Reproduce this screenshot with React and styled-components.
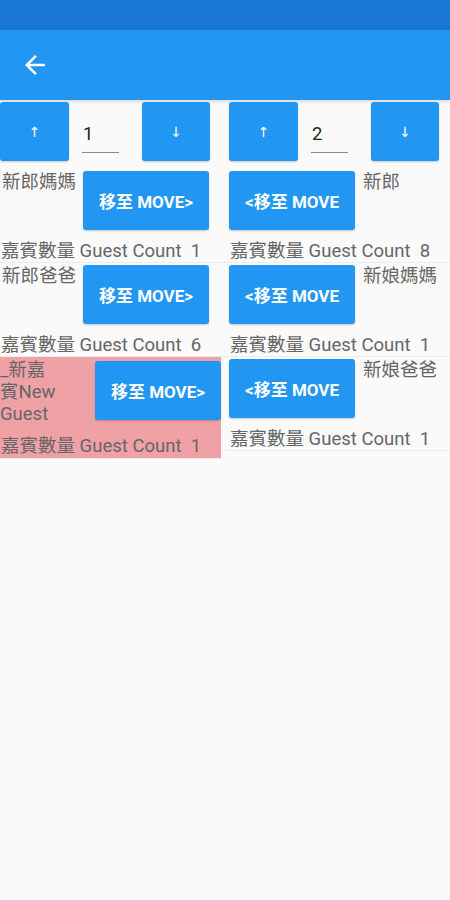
import React from 'react';
import styled, { createGlobalStyle } from 'styled-components';

const GlobalStyle = createGlobalStyle`
    body {
        margin: 0;
        background: #fafafa;
        font-family: Roboto, 'Noto Sans CJK TC', sans-serif;
    }
`

const Page = styled.div`
    width: 450px;
    min-height: 900px;
    background: #fafafa;
`

const StatusBar = styled.div`
    height: 30px;
    background: #1976d2;
`

const AppBar = styled.div`
    height: 70px;
    background: #2196f3;
    display: flex;
    align-items: center;
    padding-left: 20px;
    box-sizing: border-box;
    box-shadow: 0 2px 3px rgba(0, 0, 0, 0.12);
`

const Columns = styled.div`
    display: grid;
    grid-template-columns: 225px 225px;
    align-items: start;
`

const Column = styled.div`
    display: flex;
    flex-direction: column;
`

const Controls = styled.div`
    display: flex;
    align-items: center;
    margin-top: 2px;
    margin-bottom: 8px;
    padding-left: ${p => p.$indent}px;
`

const ArrowButton = styled.button`
    width: ${p => p.$w}px;
    height: 59px;
    margin-left: ${p => p.$gap || 0}px;
    border: none;
    border-radius: 3px;
    background: #2196f3;
    color: #fff;
    font-family: 'DejaVu Sans', sans-serif;
    font-size: 14px;
    padding: 0;
    box-shadow: 0 1px 2px rgba(0, 0, 0, 0.2);
`

const NumberField = styled.div`
    width: 37px;
    margin-left: 13px;
    height: 59px;
    display: flex;
    align-items: flex-end;
    box-sizing: border-box;
    padding-bottom: 8px;
`

const FieldInner = styled.div`
    width: 100%;
    border-bottom: 1px solid #8a8a8a;
    font-size: 18.5px;
    line-height: 30px;
    color: #212121;
    padding-left: 1px;
    padding-bottom: 3px;
`

const Item = styled.div`
    border-bottom: 1px solid #ececec;
    background: ${p => (p.$highlight ? '#efa1a6' : 'transparent')};
    width: ${p => p.$width || 'auto'};
`

const ItemRow = styled.div`
    display: flex;
    align-items: flex-start;
    padding-top: 2px;
    margin-bottom: 10px;
    padding-left: ${p => p.$indent || 0}px;
`

const Name = styled.div`
    width: ${p => p.$w}px;
    flex: none;
    box-sizing: border-box;
    padding-left: ${p => p.$pad || 0}px;
    font-size: 18.5px;
    line-height: 22px;
    color: #666;
`

const NameText = styled.div`
    max-width: ${p => p.$max || 200}px;
`

const RightName = styled(Name)`
    margin-left: 8px;
    width: auto;
`

const MoveButton = styled.button`
    width: 126px;
    height: 59px;
    flex: none;
    margin-top: ${p => p.$top || 0}px;
    border: none;
    border-radius: 3px;
    background: #2196f3;
    color: #fff;
    font-family: Roboto, 'Noto Sans CJK TC', sans-serif;
    font-weight: 700;
    font-size: 17px;
    padding: 0;
    box-shadow: 0 1px 2px rgba(0, 0, 0, 0.2);
`

const Count = styled.div`
    font-size: 18.5px;
    line-height: 22px;
    color: #666;
    padding-left: ${p => p.$indent || 1}px;
    margin-bottom: ${p => p.$tail || 0}px;
    white-space: pre;
`

const BackIcon = () => (
    <svg width="30" height="30" viewBox="0 0 24 24">
        <path fill="#fff" d="M20 11H7.83l5.59-5.59L12 4l-8 8 8 8 1.41-1.41L7.83 13H20v-2z" />
    </svg>
);

const ControlBar = ({ value, indent }) => (
    <Controls $indent={indent}>
        <ArrowButton $w={69}>↑</ArrowButton>
        <NumberField>
            <FieldInner>{value}</FieldInner>
        </NumberField>
        <ArrowButton $w={68} $gap={23}>↓</ArrowButton>
    </Controls>
);

const leftGuests = [
    { name: '新郎媽媽', count: 1 },
    { name: '新郎爸爸', count: 6 },
    { name: '_新嘉賓New Guest', count: 1, highlight: true },
];

const rightGuests = [
    { name: '新郎', count: 8 },
    { name: '新娘媽媽', count: 1 },
    { name: '新娘爸爸', count: 1 },
];

const LeftItem = ({ guest }) => (
    <Item $highlight={guest.highlight} $width={guest.highlight ? '221px' : 'auto'}>
        <ItemRow>
            <Name $w={guest.highlight ? 95 : 83} $pad={guest.highlight ? 0 : 2}>
                <NameText $max={guest.highlight ? 60 : 80}>{guest.name}</NameText>
            </Name>
            <MoveButton $top={guest.highlight ? 2 : 0}>移至 MOVE&gt;</MoveButton>
        </ItemRow>
        <Count $tail={guest.highlight ? 1 : 0}>{`嘉賓數量 Guest Count  ${guest.count}`}</Count>
    </Item>
);

const RightItem = ({ guest }) => (
    <Item>
        <ItemRow $indent={4}>
            <MoveButton>&lt;移至 MOVE</MoveButton>
            <RightName>{guest.name}</RightName>
        </ItemRow>
        <Count $indent={5}>{`嘉賓數量 Guest Count  ${guest.count}`}</Count>
    </Item>
);

export default function App() {
    return (
        <Page>
            <GlobalStyle />
            <StatusBar />
            <AppBar>
                <BackIcon />
            </AppBar>
            <Columns>
                <Column>
                    <ControlBar value="1" indent={0} />
                    {leftGuests.map((g, i) => <LeftItem key={i} guest={g} />)}
                </Column>
                <Column>
                    <ControlBar value="2" indent={4} />
                    {rightGuests.map((g, i) => <RightItem key={i} guest={g} />)}
                </Column>
            </Columns>
        </Page>
    );
}
